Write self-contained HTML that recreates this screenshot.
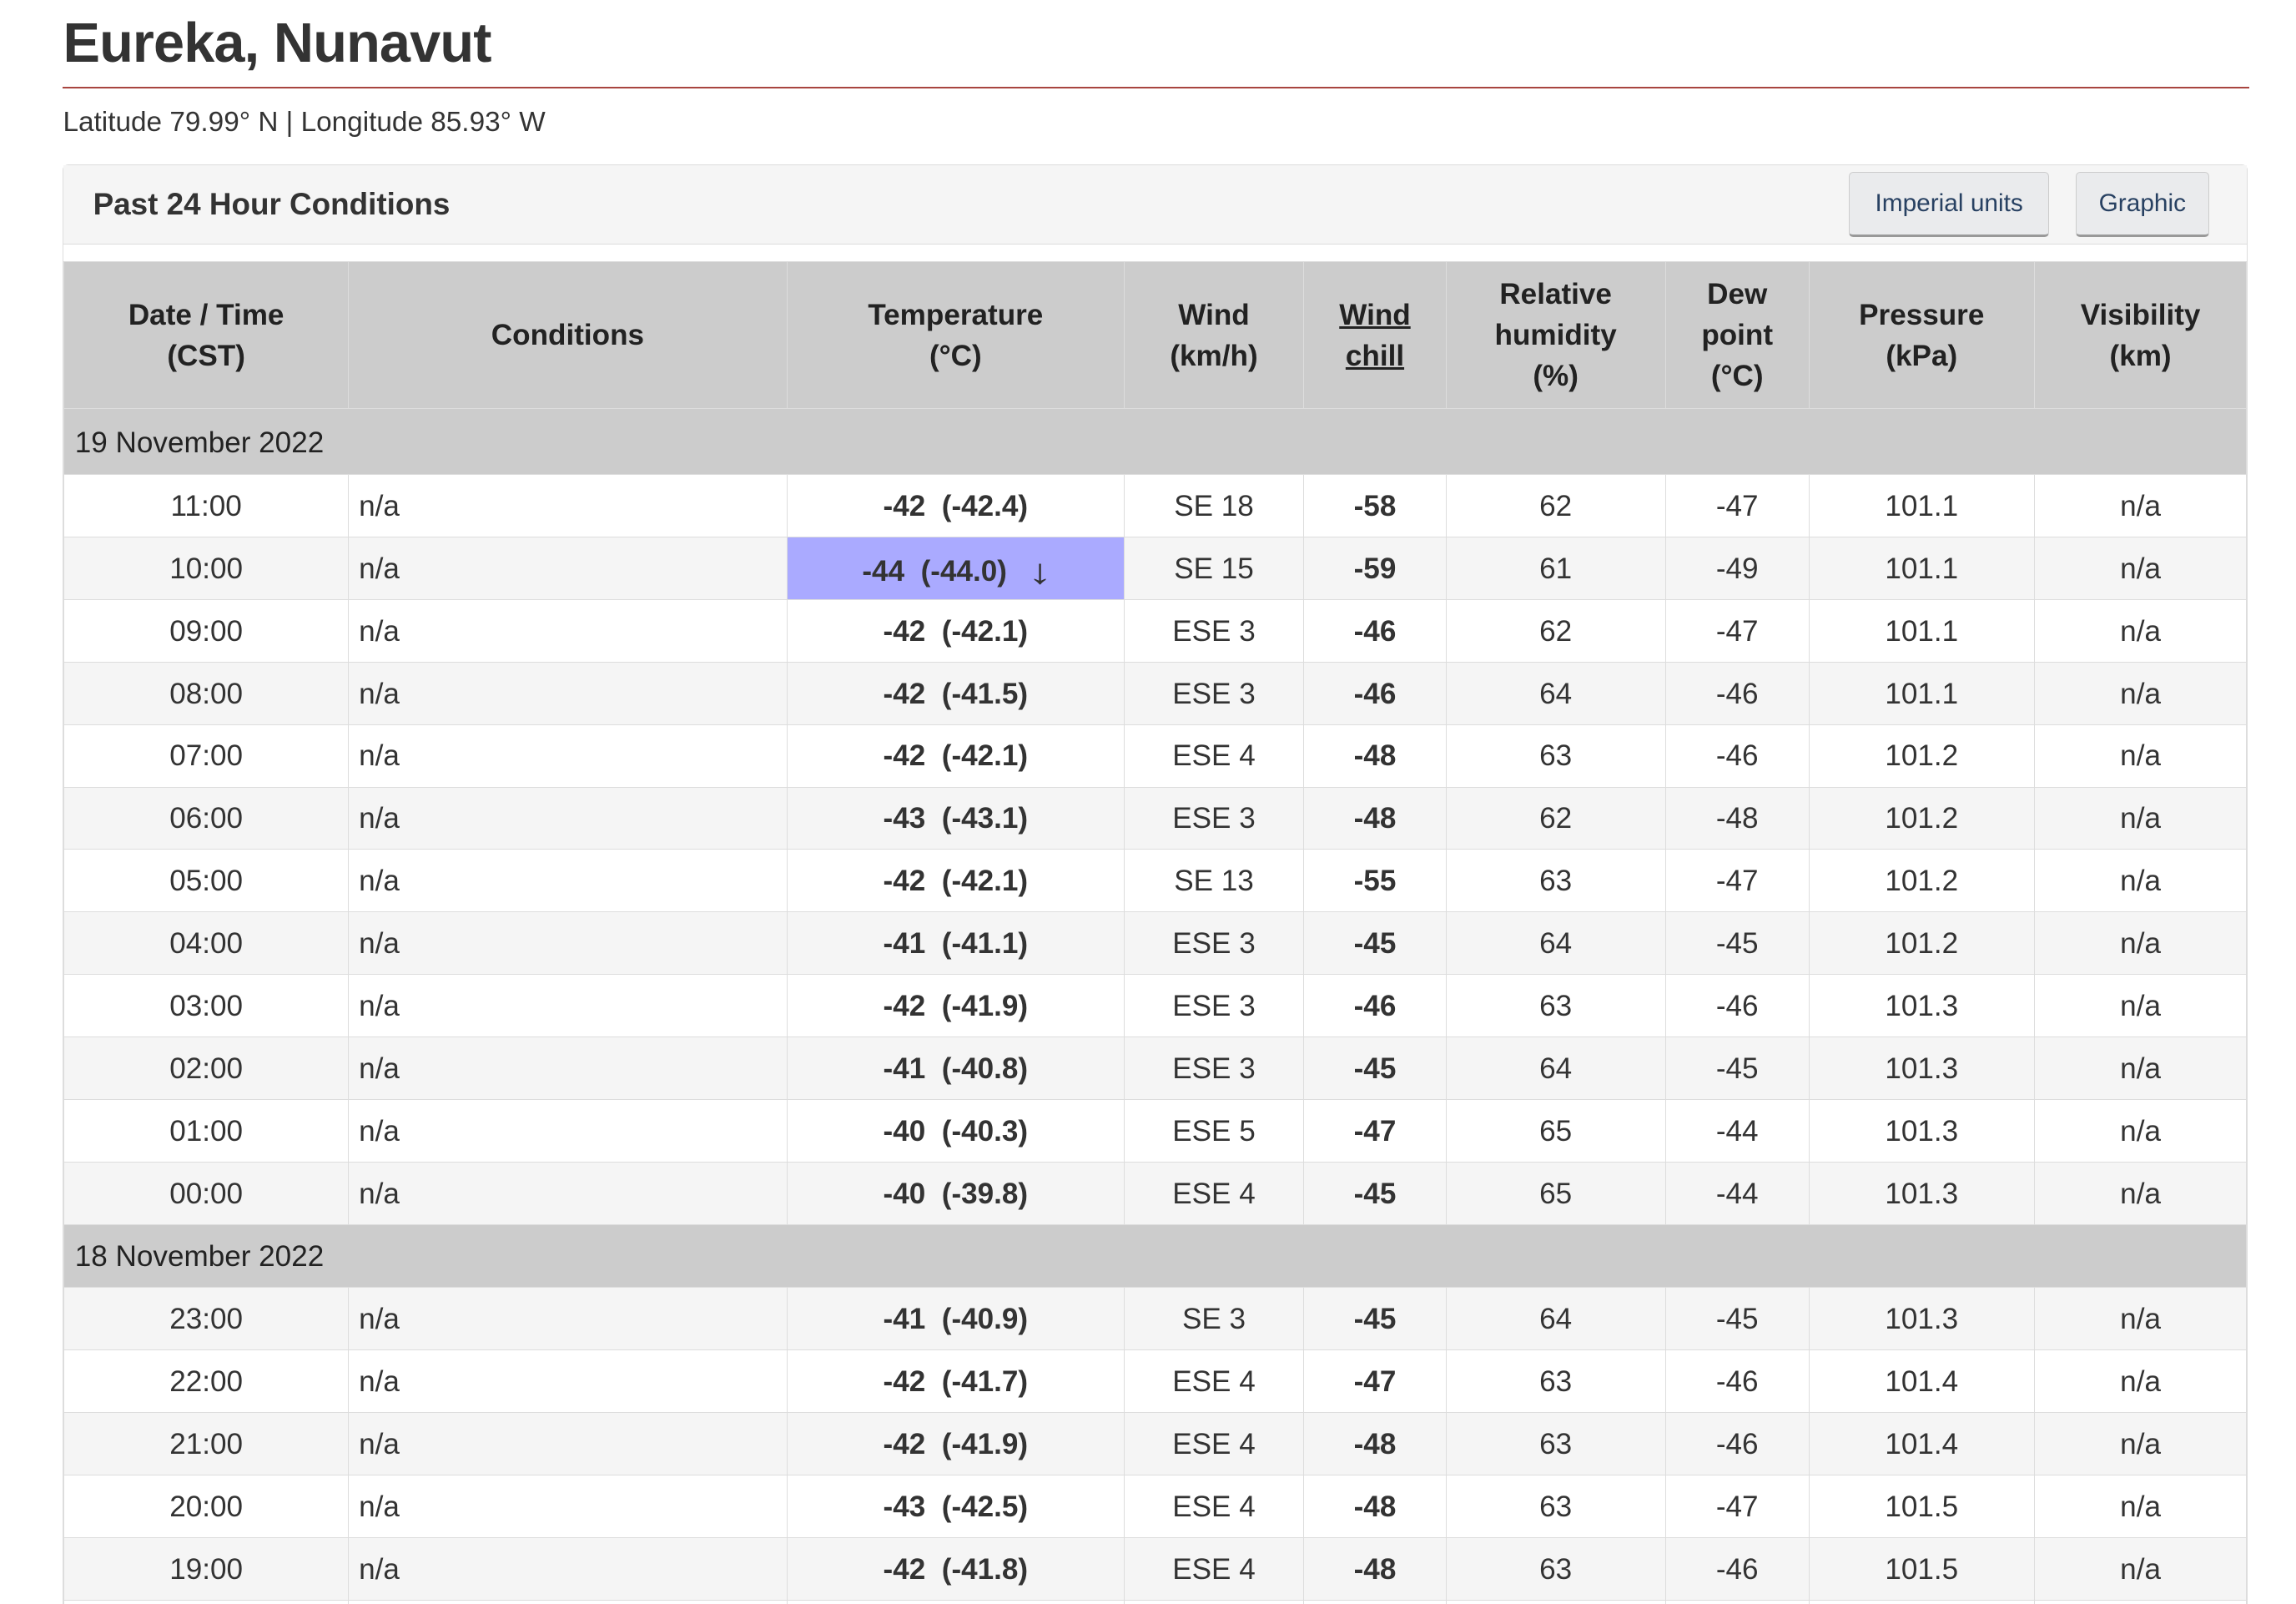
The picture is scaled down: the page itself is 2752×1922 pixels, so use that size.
<!DOCTYPE html>
<html><head><meta charset="utf-8"><style>
html,body{margin:0;padding:0;background:#fff;overflow:hidden}
body{width:2752px;height:1922px}
#w{zoom:1.7551;width:1568px;height:1095px;position:relative;font-family:"Liberation Sans",sans-serif;color:#333}
h1{position:absolute;left:43px;top:8px;margin:0;font-size:38px;font-weight:bold;color:#333;letter-spacing:-0.5px}
.rule{position:absolute;left:43px;top:59px;width:1493px;height:1.3px;background:#a8453f}
.lat{position:absolute;left:43px;top:73px;font-size:19px;color:#333}
.panel{position:absolute;left:43px;top:112px;width:1491px;height:1000px;border:1px solid #ddd;border-radius:4px;background:#fff}
.ph{height:54px;background:#f5f5f5;border-bottom:1px solid #ddd;position:relative}
.ph .t{position:absolute;left:20px;top:15px;font-size:21px;font-weight:bold;color:#333}
.btn{position:absolute;top:5px;height:44px;background:#eaebed;border:1px solid #ccc;border-bottom:2px solid #999;border-radius:3px;font-size:17px;color:#284162;line-height:42px;text-align:center;box-sizing:border-box}
table{position:absolute;left:0;top:66px;border-collapse:collapse;font-size:20px;table-layout:fixed}
th{background:#ccc;font-weight:bold;color:#222;height:100px;border:1px solid #ddd;line-height:28px;padding:0;box-sizing:border-box}
td{height:42.7px;border:1px solid #ddd;text-align:center;padding:1px 0 0;box-sizing:border-box}
td.l{text-align:left;padding-left:7px}
tr.d td{background:#ccc;text-align:left;padding-left:7px;height:42.8px;color:#222}
tr.d1 td{height:45px;padding-top:2px}
tr.g td{background:#f5f5f5}
td.b{font-weight:bold}
td.hi{background:#aaf !important}
</style></head><body><div id="w">
<h1>Eureka, Nunavut</h1>
<div class="rule"></div>
<div class="lat">Latitude 79.99° N | Longitude 85.93° W</div>
<div class="panel">
<div class="ph"><div class="t">Past 24 Hour Conditions</div>
<div class="btn" style="left:1219px;width:137px">Imperial units</div>
<div class="btn" style="left:1374px;width:91px">Graphic</div></div>
<table>
<colgroup><col style="width:194px"><col style="width:300px"><col style="width:230px"><col style="width:123px"><col style="width:97px"><col style="width:150px"><col style="width:98px"><col style="width:154px"><col style="width:145px"></colgroup>
<tr><th>Date / Time<br>(CST)</th><th>Conditions</th><th>Temperature<br>(°C)</th><th>Wind<br>(km/h)</th><th><u>Wind<br>chill</u></th><th>Relative<br>humidity<br>(%)</th><th>Dew<br>point<br>(°C)</th><th>Pressure<br>(kPa)</th><th>Visibility<br>(km)</th></tr>
<tr class="d d1"><td colspan="9">19 November 2022</td></tr>
<tr><td>11:00</td><td class="l">n/a</td><td class="b">-42&nbsp; (-42.4)</td><td>SE 18</td><td class="b">-58</td><td>62</td><td>-47</td><td>101.1</td><td>n/a</td></tr>
<tr class="g"><td>10:00</td><td class="l">n/a</td><td class="b hi">-44&nbsp; (-44.0) &nbsp;&nbsp;<span style="font-size:24px;font-weight:bold;position:relative;top:2px;display:inline-block;transform:scaleX(1.4)">↓</span></td><td>SE 15</td><td class="b">-59</td><td>61</td><td>-49</td><td>101.1</td><td>n/a</td></tr>
<tr><td>09:00</td><td class="l">n/a</td><td class="b">-42&nbsp; (-42.1)</td><td>ESE 3</td><td class="b">-46</td><td>62</td><td>-47</td><td>101.1</td><td>n/a</td></tr>
<tr class="g"><td>08:00</td><td class="l">n/a</td><td class="b">-42&nbsp; (-41.5)</td><td>ESE 3</td><td class="b">-46</td><td>64</td><td>-46</td><td>101.1</td><td>n/a</td></tr>
<tr><td>07:00</td><td class="l">n/a</td><td class="b">-42&nbsp; (-42.1)</td><td>ESE 4</td><td class="b">-48</td><td>63</td><td>-46</td><td>101.2</td><td>n/a</td></tr>
<tr class="g"><td>06:00</td><td class="l">n/a</td><td class="b">-43&nbsp; (-43.1)</td><td>ESE 3</td><td class="b">-48</td><td>62</td><td>-48</td><td>101.2</td><td>n/a</td></tr>
<tr><td>05:00</td><td class="l">n/a</td><td class="b">-42&nbsp; (-42.1)</td><td>SE 13</td><td class="b">-55</td><td>63</td><td>-47</td><td>101.2</td><td>n/a</td></tr>
<tr class="g"><td>04:00</td><td class="l">n/a</td><td class="b">-41&nbsp; (-41.1)</td><td>ESE 3</td><td class="b">-45</td><td>64</td><td>-45</td><td>101.2</td><td>n/a</td></tr>
<tr><td>03:00</td><td class="l">n/a</td><td class="b">-42&nbsp; (-41.9)</td><td>ESE 3</td><td class="b">-46</td><td>63</td><td>-46</td><td>101.3</td><td>n/a</td></tr>
<tr class="g"><td>02:00</td><td class="l">n/a</td><td class="b">-41&nbsp; (-40.8)</td><td>ESE 3</td><td class="b">-45</td><td>64</td><td>-45</td><td>101.3</td><td>n/a</td></tr>
<tr><td>01:00</td><td class="l">n/a</td><td class="b">-40&nbsp; (-40.3)</td><td>ESE 5</td><td class="b">-47</td><td>65</td><td>-44</td><td>101.3</td><td>n/a</td></tr>
<tr class="g"><td>00:00</td><td class="l">n/a</td><td class="b">-40&nbsp; (-39.8)</td><td>ESE 4</td><td class="b">-45</td><td>65</td><td>-44</td><td>101.3</td><td>n/a</td></tr>
<tr class="d"><td colspan="9">18 November 2022</td></tr>
<tr class="g"><td>23:00</td><td class="l">n/a</td><td class="b">-41&nbsp; (-40.9)</td><td>SE 3</td><td class="b">-45</td><td>64</td><td>-45</td><td>101.3</td><td>n/a</td></tr>
<tr><td>22:00</td><td class="l">n/a</td><td class="b">-42&nbsp; (-41.7)</td><td>ESE 4</td><td class="b">-47</td><td>63</td><td>-46</td><td>101.4</td><td>n/a</td></tr>
<tr class="g"><td>21:00</td><td class="l">n/a</td><td class="b">-42&nbsp; (-41.9)</td><td>ESE 4</td><td class="b">-48</td><td>63</td><td>-46</td><td>101.4</td><td>n/a</td></tr>
<tr><td>20:00</td><td class="l">n/a</td><td class="b">-43&nbsp; (-42.5)</td><td>ESE 4</td><td class="b">-48</td><td>63</td><td>-47</td><td>101.5</td><td>n/a</td></tr>
<tr class="g"><td>19:00</td><td class="l">n/a</td><td class="b">-42&nbsp; (-41.8)</td><td>ESE 4</td><td class="b">-48</td><td>63</td><td>-46</td><td>101.5</td><td>n/a</td></tr>
<tr><td>18:00</td><td class="l">n/a</td><td class="b">-42&nbsp; (-41.8)</td><td>ESE 4</td><td class="b">-48</td><td>63</td><td>-46</td><td>101.5</td><td>n/a</td></tr>
</table>
</div>
</div></body></html>
